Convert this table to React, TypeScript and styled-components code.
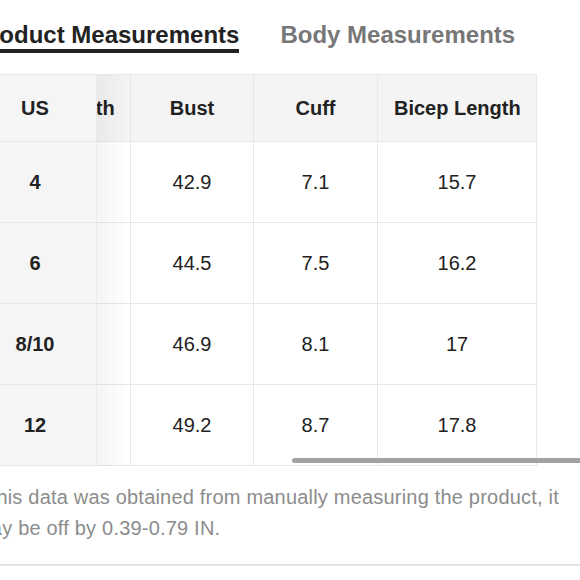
import React, { useLayoutEffect, useRef } from "react";
import styled, { createGlobalStyle } from "styled-components";

const GlobalStyle = createGlobalStyle`
  html, body {
    margin: 0;
    padding: 0;
    overflow: hidden;
    background: #fff;
  }
  body {
    font-family: "Liberation Sans", Arial, Helvetica, sans-serif;
    color: #222;
  }
`;

const columns = [
  { key: "us", label: "US", width: 123 },
  { key: "sleeve", label: "Sleeve Length", width: 168 },
  { key: "bust", label: "Bust", width: 123 },
  { key: "cuff", label: "Cuff", width: 124 },
  { key: "bicep", label: "Bicep Length", width: 159 },
];

const rows = [
  { us: "4", sleeve: "22.4", bust: "42.9", cuff: "7.1", bicep: "15.7" },
  { us: "6", sleeve: "22.8", bust: "44.5", cuff: "7.5", bicep: "16.2" },
  { us: "8/10", sleeve: "23.2", bust: "46.9", cuff: "8.1", bicep: "17" },
  { us: "12", sleeve: "23.6", bust: "49.2", cuff: "8.7", bicep: "17.8" },
];

const tableWidth = columns.reduce((sum, c) => sum + c.width, 0);

const SizeChart: React.FC = () => {
  const scrollRef = useRef<HTMLDivElement>(null);

  // the chart is shown scrolled all the way to the right
  useLayoutEffect(() => {
    const el = scrollRef.current;
    if (el) el.scrollLeft = el.scrollWidth - el.clientWidth;
  }, []);

  return (
    <Page>
      <TabBar>
        <Tab $active>Product Measurements</Tab>
        <Tab>Body Measurements</Tab>
      </TabBar>

      <TableWrap>
        <Scroller ref={scrollRef}>
          <ScrollContent>
            <Table style={{ width: tableWidth }}>
              <colgroup>
                {columns.map((c) => (
                  <col key={c.key} style={{ width: c.width }} />
                ))}
              </colgroup>
              <thead>
                <tr>
                  {columns.map((c, i) => (
                    <HeadCell key={c.key} $sticky={i === 0}>
                      {c.label}
                    </HeadCell>
                  ))}
                </tr>
              </thead>
              <tbody>
                {rows.map((r) => (
                  <tr key={r.us}>
                    {columns.map((c, i) => (
                      <Cell key={c.key} $sticky={i === 0}>
                        {r[c.key as keyof typeof r]}
                      </Cell>
                    ))}
                  </tr>
                ))}
              </tbody>
            </Table>
          </ScrollContent>
        </Scroller>
        <ScrollThumb />
      </TableWrap>

      <Note>
        *This data was obtained from manually measuring the product, it may be
        off by 0.39-0.79 IN.
      </Note>
      <Divider />
    </Page>
  );
};

const Page = styled.div`
  width: 620px;
  margin-left: -26px;
`;

const TabBar = styled.div`
  display: flex;
  gap: 41px;
  padding-top: 21px;
`;

const Tab = styled.div<{ $active?: boolean }>`
  font-size: 24px;
  font-weight: 700;
  line-height: 28px;
  color: ${(p) => (p.$active ? "#222" : "#777")};
  border-bottom: 4px solid ${(p) => (p.$active ? "#222" : "transparent")};
`;

const TableWrap = styled.div`
  position: relative;
  margin-top: 21px;
`;

const Scroller = styled.div`
  overflow-x: auto;
  scrollbar-width: none;

  &::-webkit-scrollbar {
    display: none;
  }
`;

const ScrollContent = styled.div`
  width: 754px;
`;

const Table = styled.table`
  table-layout: fixed;
  border-collapse: separate;
  border-spacing: 0;
  border-top: 1px solid #e8e8e8;
`;

const stickyStyles = `
  position: sticky;
  left: 0;
  z-index: 2;
  background: #f5f5f5;
  font-weight: 700;
  border-right-color: #f5f5f5;

  &::after {
    content: "";
    position: absolute;
    top: 0;
    bottom: -1px;
    left: 100%;
    width: 34px;
    background: linear-gradient(
      to right,
      rgba(0, 0, 0, 0.045),
      rgba(0, 0, 0, 0.015) 60%,
      rgba(0, 0, 0, 0)
    );
    pointer-events: none;
  }
`;

const HeadCell = styled.th<{ $sticky?: boolean }>`
  box-sizing: border-box;
  height: 67px;
  padding: 0 16px;
  background: #f4f4f4;
  border-right: 1px solid #e8e8e8;
  border-bottom: 1px solid #e8e8e8;
  font-size: 20px;
  font-weight: 700;
  color: #222;
  text-align: center;
  white-space: nowrap;
  ${(p) => (p.$sticky ? stickyStyles : "")}
`;

const Cell = styled.td<{ $sticky?: boolean }>`
  box-sizing: border-box;
  height: 81px;
  padding: 0 16px;
  background: #fff;
  border-right: 1px solid #e8e8e8;
  border-bottom: 1px solid #e8e8e8;
  font-size: 20px;
  color: #222;
  text-align: center;
  white-space: nowrap;
  ${(p) => (p.$sticky ? stickyStyles : "")}
`;

const ScrollThumb = styled.div`
  position: absolute;
  left: 318px;
  right: 0;
  bottom: 3px;
  height: 5px;
  border-radius: 3px;
  background: #a2a2a2;
  z-index: 3;
`;

const Note = styled.p`
  width: 596px;
  margin: 16px 0 0;
  font-size: 20px;
  line-height: 31px;
  letter-spacing: 0.2px;
  text-indent: 2px;
  color: #8c8c8c;
`;

const Divider = styled.div`
  margin-top: 20px;
  border-top: 2px solid #e4e4e4;
`;

export default function App() {
  return (
    <>
      <GlobalStyle />
      <SizeChart />
    </>
  );
}
